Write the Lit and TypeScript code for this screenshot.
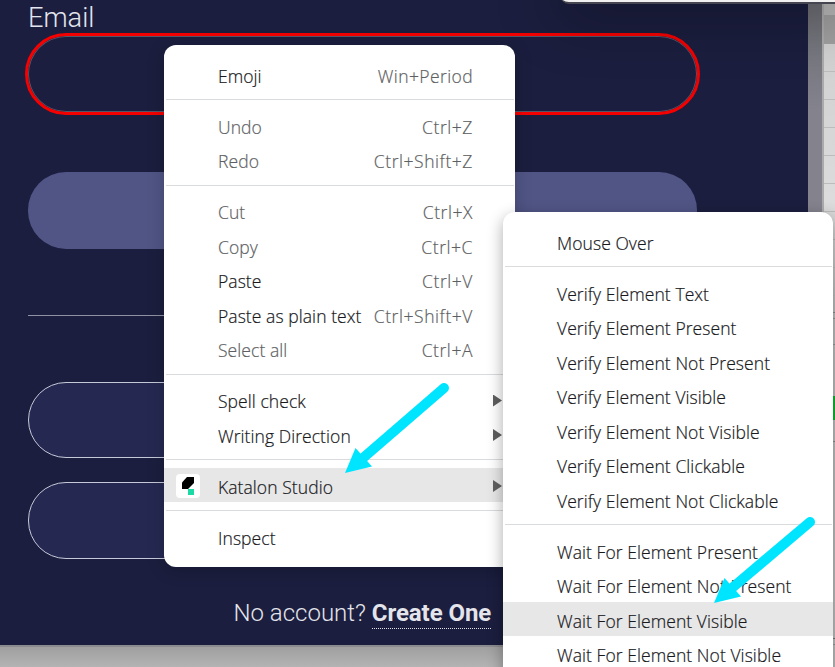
import { LitElement, html, css, svg } from "lit";
import { customElement, property } from "lit/decorators.js";

interface Item { label: string; keys?: string; off?: boolean; sub?: boolean; on?: boolean; logo?: boolean; }

const editMenu: Item[][] = [
  [{ label: "Emoji", keys: "Win+Period" }],
  [{ label: "Undo", keys: "Ctrl+Z", off: true }, { label: "Redo", keys: "Ctrl+Shift+Z", off: true }],
  [
    { label: "Cut", keys: "Ctrl+X", off: true },
    { label: "Copy", keys: "Ctrl+C", off: true },
    { label: "Paste", keys: "Ctrl+V" },
    { label: "Paste as plain text", keys: "Ctrl+Shift+V" },
    { label: "Select all", keys: "Ctrl+A", off: true },
  ],
  [{ label: "Spell check", sub: true }, { label: "Writing Direction", sub: true }],
  [{ label: "Katalon Studio", sub: true, on: true, logo: true }],
  [{ label: "Inspect" }],
];
const actionMenu: Item[][] = [
  [{ label: "Mouse Over" }],
  ["Text", "Present", "Not Present", "Visible", "Not Visible", "Clickable", "Not Clickable"].map((s) => ({ label: "Verify Element " + s })),
  ["Present", "Not Present", "Visible", "Not Visible"].map((s) => ({ label: "Wait For Element " + s, on: s === "Visible" })),
];

@customElement("context-menu")
class ContextMenu extends LitElement {
  @property({ attribute: false }) groups: Item[][] = [];
  static styles = css`
    :host { display: block; box-sizing: border-box; background: #fff; border-radius: 12px; padding-top: 11.8px;
      font: 300 17.5px/34.5px "Open Sans", "Noto Sans", sans-serif; color: #18191c; -webkit-text-stroke: .2px currentColor; }
    .sep { height: 1px; margin: 8px 1px 7.5px 2px; background: #dadbdd; }
    .item { display: flex; align-items: center; height: 34.5px; padding: 0 42px 0 12px; white-space: nowrap; }
    .on { background: #e7e7e7; }
    .icon { width: 24px; height: 24px; margin-right: 18px; flex: none; }
    .icon svg { display: block; position: relative; top: 1px; }
    .text, .keys { padding-top: 4px; }
    .text { letter-spacing: .07px; }
    .keys { margin-left: auto; color: #5e5f63; letter-spacing: .56px; }
    .keys.long { letter-spacing: .4px; }
    .off { color: #5e5f63; }
    .arrow { margin-left: auto; margin-right: -29px; width: 9px; height: 12px; background: #5f5f60; position: relative; top: 1px; clip-path: polygon(0 0, 100% 50%, 0 100%); }
  `;
  render() {
    return this.groups.map((g, i) => html`
      ${i ? html`<div class="sep"></div>` : ""}
      ${g.map((it) => html`<div class="item ${it.on ? "on" : ""} ${it.off ? "off" : ""}">
        <span class="icon">${it.logo ? html`<svg width="24" height="24" viewBox="0 0 24 24">
          <rect width="24" height="24" rx="4" fill="#fff"/>
          <path d="M11 3h7v6l-6 6H6V8.500z" fill="#000"/><rect x="12" y="15" width="6" height="6" fill="#1bdaa5"/></svg>` : ""}</span>
        <span class="text">${it.label}</span>
        ${it.keys ? html`<span class="keys ${it.keys.startsWith("Win") ? "long" : ""}">${it.keys}</span>` : ""}
        ${it.sub ? html`<span class="arrow"></span>` : ""}
      </div>`)}`);
  }
}

@customElement("app-root")
class AppRoot extends LitElement {
  static styles = css`
    :host { display: block; position: relative; width: 835px; height: 667px; overflow: hidden; background: linear-gradient(#8c8c90 0 2px, #a0a0a0 2px, #b3b3b3) 0 645px / 100% 22px no-repeat #d5d5d5; font-family: Roboto, sans-serif; }
    .frame { display: flex; height: 667px; }
    .form { box-sizing: border-box; width: 808px; height: 645px; background: #1b1e3e; padding-left: 25px; }
    .rail { width: 14px; background: linear-gradient(#6c6d73, #83828d 110px); }
    .edge { width: 2px; background: #aaa; }
    .sheet { flex: 1; background:
      linear-gradient(#8c8c8c, #8c8c8c) 0 312px / 100% 1px no-repeat,
      linear-gradient(#999, #999) 0 318px / 100% 1px no-repeat,
      linear-gradient(#999, #999) 0 344px / 100% 1px no-repeat,
      linear-gradient(#8c8c8c, #8c8c8c) 0 441px / 100% 1px no-repeat,
      linear-gradient(#7a7a7a, #7a7a7a) 0 638px / 100% 1px no-repeat,
      linear-gradient(#999, #999) 0 644px / 100% 1px no-repeat,
      repeating-linear-gradient(transparent 0 27px, #bcbcbc 27px 28px) 0 44px / 100% 252px no-repeat,
      linear-gradient(#b9b9b9 0 15px, #a0a0a0 15px 44px, #d0d0d0 44px, #dcdcdc 200px, #bebebe 300px); }
    .label { margin-left: 3px; height: 33px; font: 300 27.2px/36px Roboto, sans-serif; color: #e4e5ef; }
    .field { box-sizing: border-box; width: 675px; height: 82px; border: 3px solid #f40000; border-radius: 41px; box-shadow: inset 0 0 0 1px #55566a; }
    .submit { width: 669px; height: 77px; border-radius: 38px; background: #505585; margin: 57px 0 0 3px; }
    .rule { height: 1px; width: 669px; background: #9091a3; margin: 66px 0 66px 3px; }
    .alt { box-sizing: border-box; width: 669px; height: 76px; border: 1px solid #c8c9d8; border-radius: 38px; background: #252952; margin: 0 0 24px 3px; }
    .alt + .alt { height: 77px; }
    .signup { margin: 38px 0 0 208.5px; font: 300 24px/32px Roboto, sans-serif; color: #e4e4eb; white-space: nowrap; }
    .signup b { font-weight: 700; letter-spacing: -.06px; border-bottom: 1px dotted #e1e1e8; display: inline-block; line-height: 29px; }
    .window { position: absolute; left: 560px; right: -20px; top: -20px; height: 22px; border-radius: 0 0 0 9px; background: #f1f1f1; border-bottom: 2px solid #45464f; box-shadow: 0 5px 60px 4px #0006; }
    .main { position: absolute; left: 164px; top: 45px; width: 351px; height: 522px; box-shadow: 0 3px 18px #0003; }
    .sub { position: absolute; left: 503px; top: 212px; width: 330px; height: 480px; box-shadow: 0 5px 16px #0005; }
    .marks { position: absolute; inset: 0; }
    .go { position: absolute; left: 833px; top: 396px; width: 2px; height: 24px; background: #0a9d27; }
  `;
  render() {
    const arrow = (x: number, y: number, dx: number, dy: number) => svg`<g transform="translate(${x} ${y})" fill="#00e5ff">
      <line x1=${dx} y1=${dy} x2="18" y2="-15" stroke="#00e5ff" stroke-width="10" stroke-linecap="round"/><path d="M0 0L10.500-25L27-6.500z"/></g>`;
    return html`
      <div class="frame">
        <div class="form">
          <div class="label">Email</div><div class="field"></div><div class="submit"></div><div class="rule"></div>
          <div class="alt"></div><div class="alt"></div>
          <div class="signup">No account? <b>Create One</b></div>
        </div>
        <div class="rail"></div><div class="edge"></div><div class="sheet"></div>
      </div>
      <div class="window"></div>
      <context-menu class="main" .groups=${editMenu}></context-menu>
      <context-menu class="sub" .groups=${actionMenu}></context-menu>
      <div class="go"></div>
      <svg class="marks" width="835" height="667" viewBox="0 0 835 667">
        ${arrow(345, 473, 99, -85)}${arrow(714, 603, 96, -81)}
      </svg>`;
  }
}
